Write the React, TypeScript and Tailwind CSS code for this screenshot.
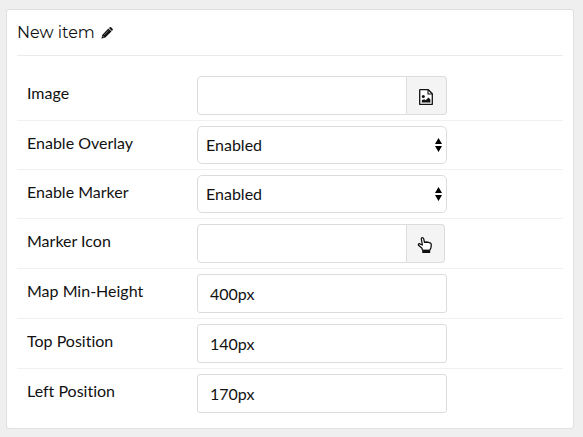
import type { ReactNode } from "react";

function PencilIcon() {
  return (
    <svg viewBox="0 0 12 12" className="size-3" aria-hidden="true">
      <path d="M.5 11.500 1.200 8 7.400 1.500 10.500 4.600 4 10.800zM8 .9 8.800.2q.6-.4 1.200 0l1.700 1.700q.4.600 0 1.200l-.8.800z" fill="#111" />
      <path d="M1.700 9.200l1.100 1.100" stroke="#fff" strokeWidth=".8" />
      <path d="m3 8.200 4.700-4.700" stroke="#fff" strokeWidth=".4" />
    </svg>
  );
}

function PictureFileIcon() {
  return (
    <svg viewBox="0 0 14 16" className="h-4 w-3.5" fill="none" aria-hidden="true">
      <path d="M1 .7h8.300l4 4v10.600H.7V1z" fill="#fff" stroke="#111" strokeWidth="1.300" strokeLinejoin="round" />
      <path d="M9 .8v4.200h4.200" stroke="#111" strokeWidth="1.100" />
      <circle cx="4.300" cy="7.500" r="1.500" fill="#111" />
      <path d="M2.800 13.500v-2.300l2.400-.9 1.500.9 2.800-2.700 1.900 2v3z" fill="#111" />
    </svg>
  );
}

function HandIcon() {
  return (
    <svg viewBox="0 0 16 18" className="h-[18px] w-4" fill="none" aria-hidden="true">
      <path
        d="M5.500 14 4.800 12 1.500 9.200Q1 8 2.300 7.700L5.400 9 4.300 3Q4.300 1.600 5.400 1.600 6.300 1.600 6.700 2.900L7.500 6.400 9.500 6 11.600 6.400 13.500 7.100Q14.300 7.700 14.300 8.900L14 11.400 13 14"
        fill="#fff"
        stroke="#111"
        strokeWidth="1.300"
        strokeLinejoin="round"
      />
      <path d="M5.200 13.600h8v3.400h-8z" fill="#111" />
    </svg>
  );
}

function Row({ id, label, children }: { id: string; label: string; children: ReactNode }) {
  return (
    <div className="flex border-t border-[#f1f1f1] px-2.5 py-[5px] first:border-t-0">
      <label htmlFor={id} className="w-[170px] shrink-0 pt-[5px] text-base leading-6">
        {label}
      </label>
      <div className="flex-1">{children}</div>
    </div>
  );
}

function TextField({ id, defaultValue }: { id: string; defaultValue: string }) {
  return (
    <input
      id={id}
      type="text"
      defaultValue={defaultValue}
      className="block h-[39px] w-full max-w-[250px] rounded-[3px] border border-[#dcdcdc] bg-white px-3 text-base outline-none"
    />
  );
}

function PickerField({ id, action, wide, children }: { id: string; action: string; wide?: boolean; children: ReactNode }) {
  return (
    <div className="flex h-[39px]">
      <input
        id={id}
        type="text"
        className="w-[210px] rounded-l-[4px] border border-[#dcdcdc] bg-white px-3 text-base outline-none"
      />
      <button
        type="button"
        aria-label={action}
        className={`flex items-center justify-center rounded-r-[4px] border border-l-0 border-[#dcdcdc] bg-[#f4f4f4] pt-0.5 pr-0.5 ${wide ? "w-10" : "w-[38px]"}`}
      >
        {children}
      </button>
    </div>
  );
}

function SelectField({ id }: { id: string }) {
  return (
    <div className="relative max-w-[250px]">
      <select
        id={id}
        defaultValue="Enabled"
        className="block h-[38px] w-full appearance-none rounded-[5px] border border-[#dcdcdc] bg-white px-2 text-base outline-none"
      >
        <option>Enabled</option>
        <option>Disabled</option>
      </select>
      <svg viewBox="0 0 7 14" className="pointer-events-none absolute top-3 right-[5px] h-3.5 w-[7px]" aria-hidden="true">
        <path d="M3.500 0 7 6H0zM0 8h7l-3.500 6z" />
      </svg>
    </div>
  );
}

export default function App() {
  return (
    <div className="min-h-screen bg-[#efefef] pt-[9px] pr-[9px] pb-2 pl-1.5 font-['Lato',sans-serif] text-[#111] [font-variant-ligatures:none]">
      <main className="rounded-[3px] border border-[#dfdfdf] bg-white px-2.5 pb-2.5">
        <header className="flex h-[46px] items-center gap-1.5 border-b border-[#ebebeb]">
          <h1 className="font-['Montserrat','Inter',sans-serif] text-base">New item</h1>
          <button type="button" aria-label="Rename item">
            <PencilIcon />
          </button>
        </header>
        <form className="pt-[15px]">
          <Row id="image" label="Image">
            <PickerField id="image" action="Choose image" wide>
              <PictureFileIcon />
            </PickerField>
          </Row>
          <Row id="overlay" label="Enable Overlay">
            <SelectField id="overlay" />
          </Row>
          <Row id="marker" label="Enable Marker">
            <SelectField id="marker" />
          </Row>
          <Row id="icon" label="Marker Icon">
            <PickerField id="icon" action="Choose icon">
              <HandIcon />
            </PickerField>
          </Row>
          <Row id="height" label="Map Min-Height">
            <TextField id="height" defaultValue="400px" />
          </Row>
          <Row id="top" label="Top Position">
            <TextField id="top" defaultValue="140px" />
          </Row>
          <Row id="left" label="Left Position">
            <TextField id="left" defaultValue="170px" />
          </Row>
        </form>
      </main>
    </div>
  );
}
